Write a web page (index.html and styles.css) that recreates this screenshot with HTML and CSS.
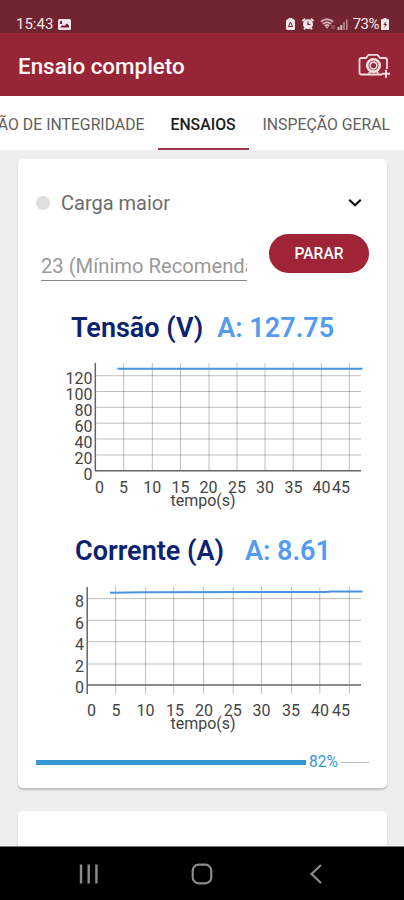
FILE: index.html
```
<!DOCTYPE html>
<html lang="pt-BR">

<head>
  <meta charset="UTF-8" />
  <meta name="viewport" content="width=device-width, initial-scale=1" />
  <title>Ensaio completo</title>
  <link rel="stylesheet" href="styles.css">
</head>

<body>
  <div class="screen">
    <div class="status-bar">
      <div class="status-left">
        <span class="status-time">15:43</span>
        <svg width="13" height="11" viewBox="0 0 13 11">
          <rect width="13" height="11" rx="1.5" fill="#f3e6e9" />
          <path d="M2 8.5 L4.5 6 L6 7 L9 4.5 L11 6.5 V8.5 Z" fill="#722531" />
          <rect x="2" y="2" width="2" height="3" fill="#722531" />
        </svg>
      </div>
      <div class="status-right">
        <svg width="9" height="12" viewBox="0 0 9 12">
          <path d="M2.5 0 H6.500 V1.200 H7.500 Q9 1.200 9 2.700 V10.500 Q9 12 7.500 12 H1.500 Q0 12 0 10.500 V2.700 Q0 1.200 1.500 1.200 H2.500 Z" fill="#f3e6e9" />
          <path d="M4.500 4 L6.500 8.500 H2.500 Z" fill="none" stroke="#722531" />
        </svg>
        <svg class="icon-alarm" width="12" height="12" viewBox="0 0 12 12">
          <path d="M0.500 3 L3 0.800 M11.500 3 L9 0.800 M2 11.500 L3 10 M10 11.500 L9 10" stroke="#f3e6e9" stroke-width="1.800" />
          <circle cx="6" cy="6.300" r="5" fill="#f3e6e9" />
          <path d="M6 3.500 V6.500 H8.500" fill="none" stroke="#722531" stroke-width="1.200" />
        </svg>
        <svg class="icon-wifi" width="15" height="12" viewBox="0 0 15 12">
          <path d="M0.800 3.800 Q7 -1.500 13.200 3.800 M2.800 6 Q7 2.300 11.200 6 M4.800 8 Q7 6 9.200 8" fill="none" stroke="#cfa9b0" stroke-width="1.900" />
          <path d="M7 10.800 L5 8.500 H9 Z" fill="#cfa9b0" />
          <path d="M12 7 V11 M14 7 V11" stroke="#a86f79" />
        </svg>
        <svg class="icon-signal" width="11" height="11" viewBox="0 0 11 11">
          <path d="M1.500 8 V11 M4.300 6 V11" stroke="#e2c8cd" stroke-width="1.800" />
          <path d="M7 3 V11 M9.800 0.500 V11" stroke="#b88791" stroke-width="1.600" />
        </svg>
        <span class="status-battery">73%</span>
        <svg width="8" height="12" viewBox="0 0 8 12">
          <path d="M2.500 0 H5.500 V1.200 H8 V12 H0 V1.200 H2.500 Z" fill="#f3e6e9" />
          <path d="M4.800 3 L2.500 7 H4 L3.500 10 L6 6 H4.500 Z" fill="#722531" />
        </svg>
      </div>
    </div>

    <div class="app-bar">
      <div class="app-title">Ensaio completo</div>
      <svg class="icon-camera" width="34" height="26" viewBox="0 0 34 26" fill="none" stroke="#f6dde0" stroke-width="1.800">
        <path d="M25 21.500 H4.500 Q2.500 21.500 2.500 19.500 V7 Q2.500 5 4.500 5 H9 L11.500 1.800 H20.500 L23 5 H28 Q30 5 30 7 V16" />
        <circle cx="16.500" cy="12.500" r="6.300" stroke-width="2.600" />
        <circle cx="16.500" cy="12.500" r="3.400" stroke-width="1.600" />
        <path d="M11.500 20.500 L13.500 18.500 H19.500 L21.500 20.500" stroke-width="1.400" />
        <path d="M25 20.800 H33 M29 16.800 V24.800" stroke-width="2" />
      </svg>
    </div>

    <div class="tabs">
      <div class="tab tab-first">INSPEÇÃO DE INTEGRIDADE</div>
      <div class="tab tab-active">ENSAIOS</div>
      <div class="tab tab-last">INSPEÇÃO GERAL</div>
    </div>

    <div class="content">
      <div class="card">
        <div class="card-header">
          <span class="dot"></span>
          <span class="card-title">Carga maior</span>
          <svg width="14" height="10" viewBox="0 0 14 10">
            <path d="M1.200 1.700 L7 7.200 L12.800 1.700" fill="none" stroke="#111" stroke-width="2.200" />
          </svg>
        </div>

        <div class="form-row">
          <div class="field"><span>23 (Mínimo Recomendado)</span></div>
          <button class="btn-stop">PARAR</button>
        </div>

        <div class="chart-title chart-title-voltage">
          <span>Tensão (V)</span>
          <span class="chart-value">A: 127.75</span>
        </div>
        <svg class="chart" width="369" height="165" viewBox="0 0 369 165">
          <path class="grid" d="M77 25.700 H343 M77 41.500 H343 M77 57.300 H343 M77 73.200 H343 M77 89 H343 M77 105 H343" />
          <path class="grid" d="M105.700 13 V121 M134.300 13 V121 M162.500 13 V121 M191 13 V121 M219 13 V121 M247 13 V121 M275.200 13 V121 M303.300 13 V121 M331.400 13 V121" />
          <path class="axis" d="M77.300 13 V121" />
          <path class="axis" d="M77 120.700 H343" />
          <path class="serie" d="M99.500 18.800 H344.500" />
          <g class="labels-y">
            <text x="74.500" y="34">120</text>
            <text x="74.500" y="49.500">100</text>
            <text x="74.500" y="65.500">80</text>
            <text x="74.500" y="81.500">60</text>
            <text x="74.500" y="97.500">40</text>
            <text x="74.500" y="113.500">20</text>
            <text x="74.500" y="129.500">0</text>
          </g>
          <g class="labels-x">
            <text x="81.500" y="143.300">0</text>
            <text x="105.500" y="143.300">5</text>
            <text x="134.300" y="143.300">10</text>
            <text x="162.500" y="143.300">15</text>
            <text x="190.500" y="143.300">20</text>
            <text x="219" y="143.300">25</text>
            <text x="247" y="143.300">30</text>
            <text x="275.500" y="143.300">35</text>
            <text x="303.500" y="143.300">40</text>
            <text x="323" y="143.300">45</text>
            <text x="185" y="156">tempo(s)</text>
          </g>
        </svg>

        <div class="chart-title chart-title-current">
          <span>Corrente (A)</span>
          <span class="chart-value">A: 8.61</span>
        </div>
        <svg class="chart" width="369" height="165" viewBox="0 0 369 165">
          <path class="grid" d="M69 23.600 H343 M69 45.300 H343 M69 66.700 H343 M69 89 H343" />
          <path class="grid" d="M97.700 12 V119 M127.600 12 V119 M155.700 12 V119 M185.500 12 V119 M215.200 12 V119 M243.500 12 V119 M273.500 12 V119 M301.800 12 V119 M331.400 12 V119" />
          <path class="axis" d="M69.200 12 V119" />
          <path class="axis" d="M69 110 H343" />
          <path class="serie" d="M92 17.800 L127 17.200 L307 17 L314 16.400 H344.500" />
          <g class="labels-y">
            <text x="66" y="31.500">8</text>
            <text x="66" y="53.500">6</text>
            <text x="66" y="75">4</text>
            <text x="66" y="96.800">2</text>
            <text x="66" y="118.300">0</text>
          </g>
          <g class="labels-x">
            <text x="73.500" y="141.300">0</text>
            <text x="98" y="141.300">5</text>
            <text x="127.500" y="141.300">10</text>
            <text x="157" y="141.300">15</text>
            <text x="186" y="141.300">20</text>
            <text x="214.800" y="141.300">25</text>
            <text x="243.500" y="141.300">30</text>
            <text x="273" y="141.300">35</text>
            <text x="302" y="141.300">40</text>
            <text x="323" y="141.300">45</text>
            <text x="185" y="154">tempo(s)</text>
          </g>
        </svg>

        <div class="progress">
          <div class="progress-done"></div>
          <span class="progress-text">82%</span>
          <div class="progress-rest"></div>
        </div>
      </div>

      <div class="card card-next"></div>
    </div>

    <div class="nav-bar">
      <svg width="20" height="20" viewBox="0 0 20 20">
        <path d="M2 0.500 V19.500 M9.700 0.500 V19.500 M17.400 0.500 V19.500" stroke="#8c8c8c" stroke-width="2.400" />
      </svg>
      <svg class="icon-home" width="22" height="22" viewBox="0 0 22 22">
        <rect x="1.700" y="1.700" width="18.600" height="18.600" rx="6" fill="none" stroke="#8c8c8c" stroke-width="2.200" />
      </svg>
      <svg width="14" height="20" viewBox="0 0 14 20">
        <path d="M12 1 L2.500 10 L12 19" fill="none" stroke="#8c8c8c" stroke-width="2.200" />
      </svg>
    </div>
  </div>
</body>

</html>
```
FILE: styles.css
```
* {
  box-sizing: border-box;
}

body {
  margin: 0;
  font-family: Roboto, "Liberation Sans", sans-serif;
}

svg {
  display: block;
  flex: none;
}

.screen {
  display: flex;
  flex-direction: column;
  width: 404px;
  height: 900px;
  overflow: hidden;
  background: #eee;
}

/* status bar */
.status-bar {
  display: flex;
  justify-content: space-between;
  height: 33px;
  padding: 14px 15px 0 16px;
  background: #722531;
  color: #f3e6e9;
  font-size: 15px;
  line-height: 20px;
}

.status-left,
.status-right {
  display: flex;
  align-items: center;
  height: 20px;
}

.status-left {
  gap: 5px;
}

.icon-alarm {
  margin-left: 7px;
}

.icon-wifi {
  margin-left: 6px;
}

.icon-signal {
  margin-left: 2px;
}

.status-battery {
  margin: 0 2px 0 5px;
  letter-spacing: -0.5px;
}

/* app bar */
.app-bar {
  display: flex;
  align-items: center;
  justify-content: space-between;
  height: 63px;
  padding: 2px 13px 0 18px;
  background: #962636;
  color: #fff5f5;
}

.app-title {
  padding-top: 1px;
  font-size: 22.4px;
  font-weight: 500;
}

/* tabs */
.tabs {
  display: flex;
  justify-content: flex-end;
  height: 55px;
  background: #fff;
  border-bottom: 1px solid #f4f4f4;
  color: #606060;
  font-size: 15.8px;
  line-height: 57px;
  white-space: nowrap;
}

.tab {
  flex: none;
}

.tab-first {
  padding-right: 13px;
}

.tab-active {
  width: 91px;
  border-bottom: 2px solid #a0354a;
  color: #1c1c1c;
  font-weight: 500;
  text-align: center;
}

.tab-last {
  padding: 0 14px;
}

/* content */
.content {
  flex: 1;
  padding: 8px 17px 0 18px;
  overflow: hidden;
}

.card {
  height: 629px;
  border-radius: 5px;
  background: #fff;
  box-shadow: 0 2px 2px rgba(0, 0, 0, 0.2);
}

.card-next {
  height: 60px;
  margin-top: 23px;
}

.card-header {
  display: flex;
  align-items: center;
  height: 75px;
  padding: 12px 25px 0 18px;
}

.dot {
  width: 14px;
  height: 14px;
  border-radius: 50%;
  background: #dedede;
}

.card-title {
  flex: 1;
  margin-left: 11px;
  color: #6c6c6c;
  font-size: 20px;
}

.form-row {
  display: flex;
  justify-content: space-between;
  height: 74px;
  padding: 0 18px 0 23px;
}

.field {
  width: 206px;
  height: 47px;
  padding-top: 20px;
  border-bottom: 1px solid #888;
  color: #999;
  font-size: 20.2px;
  line-height: 24px;
  white-space: nowrap;
  overflow: hidden;
}

.btn-stop {
  width: 100px;
  height: 39px;
  padding: 0;
  border: 0;
  border-radius: 20px;
  background: #a02336;
  color: #fff;
  font-family: inherit;
  font-size: 15.6px;
  font-weight: 500;
}

/* charts */
.chart-title {
  display: flex;
  color: #0b2270;
  font-size: 27px;
  font-weight: 600;
  line-height: 40px;
  white-space: pre;
}

.chart-title-voltage {
  height: 42px;
  gap: 14px;
  padding-left: 53px;
}

.chart-title-current {
  height: 60px;
  gap: 21px;
  padding: 16px 0 0 57px;
}

.chart-value {
  color: #539bf0;
}

.chart {
  .grid {
    fill: none;
    stroke: rgba(0, 0, 0, 0.25);
    stroke-width: 1;
  }

  .axis {
    fill: none;
    stroke: #666;
    stroke-width: 1.5;
  }

  .serie {
    fill: none;
    stroke: #4a93e0;
    stroke-width: 2;
  }

  text {
    fill: #444;
    font-size: 16px;
  }

  .labels-y {
    text-anchor: end;
  }

  .labels-x {
    text-anchor: middle;
  }
}

/* progress */
.progress {
  display: flex;
  align-items: center;
  height: 20px;
  margin-top: 12px;
  padding: 0 18px;
}

.progress-done {
  width: 270px;
  height: 5px;
  background: #3597d4;
}

.progress-text {
  margin: 0 3px;
  color: #3597d4;
  font-size: 15.6px;
}

.progress-rest {
  flex: 1;
  height: 1px;
  background: #bbb;
}

/* android navigation */
.nav-bar {
  display: flex;
  justify-content: space-between;
  align-items: center;
  height: 54px;
  padding: 0 81px 0 79px;
  border-top: 1px solid #777;
  background: #000;
}

.icon-home {
  margin-right: 4px;
}
```
